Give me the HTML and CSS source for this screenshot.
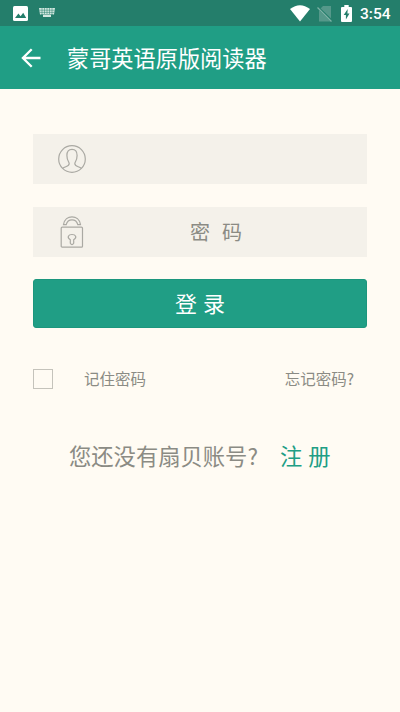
FILE: index.html
```html
<!DOCTYPE html>
<html lang="zh-CN">
<head>
<meta charset="utf-8">
<title>蒙哥英语原版阅读器</title>
<link rel="stylesheet" href="styles.css">
</head>
<body>
<div class="status">
  <svg class="photo" width="15" height="15" viewBox="0 0 15 15"><rect width="15" height="15" rx="1.500" fill="#fff"/><path d="M2 12l3.400-4.400 2.200 2.600 2.600-3.400L13.200 12z" fill="#247e6b"/></svg>
  <svg class="keyboard" width="16" height="10" viewBox="0 0 16 10"><path d="M0 0h16l-1 6.500h-3V9H4V6.500H1z" fill="#d3e8e1"/><path d="M.5 2.200h15M.8 4.400h14.400M2 6.500h12M3 0v6M5.500 0v6M8 0v6M10.500 0v6M13 0v6" stroke="#247e6b" stroke-width=".5"/></svg>
  <span class="spacer"></span>
  <svg class="wifi" width="20" height="17" viewBox="0 0 20 17"><path d="M0 4Q10-3.600 20 4L10 16.500z" fill="#fff"/></svg>
  <svg class="nosim" width="16" height="17" viewBox="0 0 16 17"><path d="M6 1h8v15.500H2V5z" fill="#55988a"/><path d="M0 1.500l15.500 15" stroke="#247e6b" stroke-width="2.400"/><path d="M.5 2.500L14.500 16.500" stroke="#7db1a5" stroke-width="1.200"/></svg>
  <svg class="battery" width="11" height="17" viewBox="0 0 11 17"><path d="M3.300 0h4.400v2H10q1 0 1 1v13q0 1-1 1H1q-1 0-1-1V3q0-1 1-1h2.300z" fill="#fff"/><path d="M6.700 4L2.700 10h2.200v4.500L8.500 8.500H6.400z" fill="#247e6b"/></svg>
  <span class="time">3:54</span>
</div>
<header class="bar">
  <svg width="20" height="20" viewBox="0 0 20 20" fill="none" stroke="#fff" stroke-width="2.300"><path d="M19.500 10H2M10.700 1.200L1.900 10l8.800 8.800"/></svg>
  <h1>蒙哥英语原版阅读器</h1>
</header>
<main>
  <div class="field">
    <svg width="28" height="28" viewBox="0 0 28 28" fill="none" stroke="#aaa9a3" stroke-width="1.200"><circle cx="14" cy="14" r="13.300"/><path d="M4.800 23.300C7 21.300 11.200 21.700 11.200 18.500c0-1.500-2.300-3-2.300-8.100 0-4 1.800-6 5.100-6s5.100 2 5.100 6c0 5.100-2.300 6.600-2.300 8.100 0 3.200 4.200 2.800 6.400 4.800"/></svg>
  </div>
  <div class="field password">
    <svg width="24" height="32" viewBox="0 0 24 32" fill="none" stroke="#aaa9a3" stroke-width="1.200"><rect x="1.200" y="11.200" width="21.300" height="20" rx="1"/><path d="M3.500 8.600C5-1.800 19-1.800 20.500 8.600h-2.700c-1.600-6.400-10-6.400-11.600 0z"/><path d="M10.300 23.700c-3.700-2-2-5.200 1.700-5.200s5.400 3.200 1.700 5.200v3.500q-1.700 2.800-3.400 0z"/></svg>
    <span>密&nbsp; 码</span>
  </div>
  <button class="login">登 录</button>
  <div class="options">
    <span class="check"></span><span class="remember">记住密码</span><span class="forgot">忘记密码?</span>
  </div>
  <div class="signup"><span>您还没有扇贝账号?</span><a>注 册</a></div>
</main>
</body>
</html>
```
FILE: styles.css
```css
* { box-sizing: border-box; }
body {
  margin: 0;
  height: 712px;
  overflow: hidden;
  background: #fffbf3;
  color: #8b8b84;
  font-family: "Noto Sans CJK SC", sans-serif;
}
svg { display: block; flex: none; }
.status {
  height: 26px;
  padding: 0 9px 0 13px;
  display: flex;
  align-items: center;
  background: #247e6b;
  color: #fff;
}
.photo { margin-top: 1px; }
.keyboard { margin-left: 11px; }
.spacer { flex: 1; }
.nosim { margin-left: 7px; }
.battery { margin-left: 8px; }
.time {
  width: 31px;
  margin: 2px 0 0 8px;
  font: 500 15.500px/20px Roboto, sans-serif;
  white-space: nowrap;
}
.bar {
  height: 63px;
  padding: 0 21px;
  display: flex;
  align-items: center;
  gap: 26px;
  background: #209e85;
  color: #fff;
}
h1 {
  margin: -2px 0 0;
  font-size: 22.200px;
  line-height: 32px;
  font-weight: 400;
  white-space: nowrap;
}
main { padding: 45px 33px 0; }
.field {
  height: 50px;
  margin-bottom: 23px;
  padding-left: 25px;
  display: flex;
  align-items: center;
  background: #f4f1ea;
}
.password { margin-bottom: 22px; padding-left: 27px; }
.password span {
  flex: 1;
  padding-left: 106px;
  font-size: 20px;
  line-height: 30px;
  word-spacing: 1.500px;
  white-space: nowrap;
}
.login {
  display: block;
  width: 100%;
  height: 49px;
  padding: 0 0 4px;
  border: 1px solid #1c967d;
  border-radius: 3px;
  background: #209e85;
  color: #fff;
  font: 400 22px/40px "Noto Sans CJK SC", sans-serif;
  word-spacing: 1px;
}
.options {
  height: 20px;
  margin-top: 41px;
  display: flex;
  align-items: center;
  font-size: 15.500px;
  line-height: 20px;
}
.check { width: 20px; height: 20px; border: 1px solid #c5c3bb; }
.remember { margin: -2px 0 0 31px; }
.forgot { margin: -2px 13px 0 auto; }
.signup {
  margin-top: 49px;
  padding-left: 36px;
  display: flex;
  font-size: 22.300px;
  line-height: 34px;
  white-space: nowrap;
}
.signup a { margin-left: 22px; color: #209e85; word-spacing: 1px; }
```
